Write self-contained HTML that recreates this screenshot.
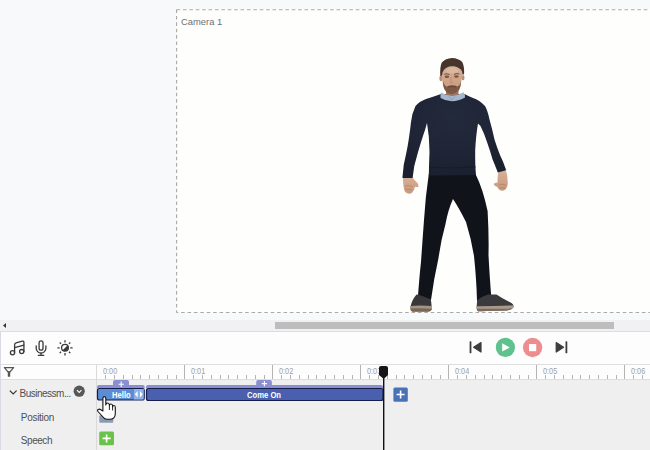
<!DOCTYPE html>
<html><head><meta charset="utf-8">
<style>
*{margin:0;padding:0;box-sizing:border-box}
html,body{width:650px;height:450px;overflow:hidden;background:#f8f9fb;font-family:"Liberation Sans",sans-serif;position:relative}
.a{position:absolute}
#cam{left:176px;top:9px;width:480px;height:304px;background:#fefefd}
#camlbl{left:181px;top:16px;font-size:9.4px;color:#707070;white-space:nowrap}
#track{left:0;top:320px;width:650px;height:11px;background:#f1f1f3}
#thumb{left:275px;top:322px;width:339px;height:7px;background:#bdbdbd}
#line1{left:0;top:331px;width:650px;height:1px;background:#dcdce4}
#tool{left:0;top:332px;width:650px;height:32px;background:#fdfdfd}
#line2{left:0;top:364px;width:650px;height:1px;background:#dedede}
#hdr{left:0;top:365px;width:650px;height:14px;background:#fdfdfd}
#line3{left:0;top:379px;width:650px;height:1px;background:#dedede}
#rows{left:0;top:380px;width:650px;height:70px;background:#efefef}
#vdiv{left:96px;top:365px;width:1px;height:85px;background:#dadada}
#ledge{left:0;top:332px;width:1px;height:118px;background:#d8d8e6}
.lbl{font-size:9.5px;color:#505050;white-space:nowrap}
.tick{font-size:8.5px;transform:scaleX(0.86);transform-origin:0 0;color:#a0a0a0;white-space:nowrap}
</style></head><body>
<div id="cam" class="a"></div>
<svg class="a" style="left:0;top:0" width="650" height="450">
  <line x1="176.5" y1="9.8" x2="650" y2="9.8" stroke="#a9a9a9" stroke-width="1.1" stroke-dasharray="3.6 2.8"/>
  <line x1="176.6" y1="9.5" x2="176.6" y2="312.5" stroke="#a9a9a9" stroke-width="1.1" stroke-dasharray="3.6 2.8"/>
  <line x1="176.5" y1="312.5" x2="650" y2="312.5" stroke="#a9a9a9" stroke-width="1.1" stroke-dasharray="3.6 2.8" stroke-dashoffset="1.8"/>
</svg>

<!-- man -->
<svg class="a" style="left:0;top:0" width="650" height="450">
  <defs>
    <radialGradient id="swg" cx="0.5" cy="0.3" r="0.7">
      <stop offset="0" stop-color="#232a3b"/>
      <stop offset="0.6" stop-color="#1f2536"/>
      <stop offset="1" stop-color="#1b202f"/>
    </radialGradient>
    <linearGradient id="skin" x1="0" y1="0" x2="0" y2="1">
      <stop offset="0" stop-color="#d8b096"/>
      <stop offset="1" stop-color="#c8987c"/>
    </linearGradient>
  </defs>
  <!-- pants -->
  <path d="M428.8 174 L475.5 174 Q483 189 487.6 211 Q489 235 488.5 255 Q489.5 275 491.5 300 L477 301 Q476.5 280 474 256 Q471 238 466 222 Q459 208 453 199 Q448 210 445.5 224 Q441 240 438.5 258 Q434 278 431 300 L418 296 Q419.5 275 421 262 Q422.5 240 424 220 Q425.5 196 428.8 174 Z" fill="#11131b"/>
  <!-- shoes -->
  <path d="M416.5 294.5 Q421 295 430.8 299.5 Q431.8 304 431.6 309.5 Q431 311.5 428 311.5 L412.5 311.5 Q410 311 410.5 307 Q411.5 300.5 416.5 294.5 Z" fill="#38383a"/>
  <path d="M410.5 306 Q420 304.8 431.6 306 L431.6 309.3 Q431 311.5 428 311.5 L412.5 311.5 Q410 311 410.5 306 Z" fill="#a29585"/>
  <path d="M411 308.5 Q420 308 431.5 308.8 L431.4 309.8 Q431 311.5 428 311.5 L412.5 311.5 Q410.5 311 411 308.5 Z" fill="#7a6656"/>
  <path d="M477.2 300 Q483 296 488 294.5 L496.5 294.5 Q503 299 511.5 303 Q514.5 305 513.2 307.8 Q511 310.3 505 310.6 L478.5 311.3 Q476.6 311 476.6 307 Z" fill="#3b3b3d"/>
  <path d="M476.7 306.2 Q495 306.3 513.4 305.2 Q514.2 306.2 513.2 307.8 Q511 310.3 505 310.6 L478.5 311.3 Q476.6 311 476.7 306.2 Z" fill="#a89b8c"/>
  <path d="M476.8 308.8 Q495 309 512.5 308.3 Q511 310.3 505 310.6 L478.5 311.3 Q476.7 311 476.8 308.8 Z" fill="#7d6a5a"/>
  <!-- hands -->
  <path d="M403 177 L412.5 177 Q414 180 416.5 182 Q419 184 418.5 186.5 Q416.5 187.5 415 186.5 Q414.5 191 411.5 193.3 Q407 194.5 404.8 191.5 Q402.8 186 403 177 Z" fill="url(#skin)"/>
  <path d="M498.5 171.5 L506 170.5 Q507.8 176 507.8 183 Q507.5 189 503 190.8 Q499 191 497.5 187 Q494.5 186.5 493.6 184 Q494.5 182.5 497.5 182.5 Q497.2 177 498.5 171.5 Z" fill="url(#skin)"/>
  <path d="M499 184.5 Q503 183.5 506.5 185.5 M499.5 187.8 Q503 187 506 188.5" stroke="#a9755c" stroke-width="0.7" fill="none" opacity="0.8"/>
  <path d="M405 186 Q408.5 185 412.5 186.5 M405.5 189.5 Q408.5 188.6 412 189.8" stroke="#a9755c" stroke-width="0.7" fill="none" opacity="0.8"/>
  <!-- sweater -->
  <path d="M441 94 Q434 96.5 426 99 Q419 101.5 415.5 106 Q412 113 411 122 Q409 140 406.5 152 Q403 165 402.4 178 L412.6 178 Q413.5 166 417.5 154 Q421.5 140 425 130 L427 123 Q429.5 137 429.5 152 Q429 165 428.8 175.5 L476 175 Q475 165 475.2 150 Q476 135 478 123.5 L480.5 126 Q484 133 487 142 Q490.5 152 492.6 159.4 Q495 165 497.8 172.6 L506.2 170.2 Q503.5 162 500 155 Q496.5 146 494.5 139.4 Q492 128 489.5 119.4 Q487.5 110 485 106 Q479.5 100 473 98 Q468 96 464.5 94 Z" fill="url(#swg)"/>
  <path d="M429 166.8 Q452 167.8 475.5 166.3 L475.6 167.6 Q452 169.1 429 168.1 Z" fill="#181c28" opacity="0.8"/>
  <!-- neck & collar -->
  <path d="M446 88 L458.5 88 L458.5 96 L446 96 Z" fill="#9c735f"/>
  <path d="M441 92.5 Q446.5 95.5 452 96 Q458 95.5 463.5 92.3 Q465.3 94.5 465 97.5 Q458 101.3 452 101.3 Q446 101.3 440.5 98 Q440.2 95 441 92.5 Z" fill="#a4b7cf"/>
  <path d="M449 96.5 L452 100 L455 96.5" fill="none" stroke="#8797ad" stroke-width="0.8"/>
  <!-- ears -->
  <ellipse cx="441" cy="78.3" rx="1.6" ry="3" fill="#bd8c72"/>
  <ellipse cx="463.1" cy="77.6" rx="1.4" ry="2.7" fill="#bd8c72"/>
  <!-- face -->
  <path d="M442 74 Q442.5 66.5 452 66 Q461.8 66.5 462.2 74 Q462 80 461 83 Q460 88 459 89 Q456 92.5 451.5 93 Q447.5 92.5 445 89.5 Q443 86.5 442.5 82 Q442 78 442 74 Z" fill="url(#skin)"/>
  <!-- forehead highlight -->
  <ellipse cx="452" cy="70.5" rx="6" ry="3" fill="#dcbca3" opacity="0.7"/>
  <!-- brows/eyes -->
  <path d="M444.3 74.3 Q446.8 73.3 449.5 74.5 M454 74.3 Q456.7 73.1 459.3 74" stroke="#6d4b3b" stroke-width="1" fill="none"/>
  <ellipse cx="446.9" cy="76.8" rx="2.3" ry="1.2" fill="#7a5544"/>
  <ellipse cx="456.4" cy="76.5" rx="2.3" ry="1.2" fill="#7a5544"/>
  <path d="M451.3 77 L450.6 82.5 Q451.8 84 453.2 82.5" stroke="#b58169" stroke-width="0.8" fill="none"/>
  <!-- beard -->
  <path d="M442.9 81 Q443.8 85 446.2 86.8 Q449.3 85 451.8 85.3 Q454.5 85 457.5 86.6 Q460.3 85 461 81.5 Q461.1 86.5 459.2 89.8 Q456 93.8 451.7 94 Q447.3 93.8 444.8 90 Q442.9 87 442.9 81 Z" fill="#7d5846"/>
  <path d="M448 87 Q451.8 86 456 87" stroke="#5e3d30" stroke-width="0.8" fill="none"/>
  <!-- hair -->
  <path d="M440.3 76 Q439.7 67 441.8 62.5 Q445.5 58.3 452 58 Q458.5 58.3 462.2 62 Q464.5 66 464.1 74 L462.6 75 Q462.2 71 461 69.8 Q458 66.5 452 66.2 Q446.8 66.5 444.2 69.5 Q442.3 71.5 442 75.5 Z" fill="#47352b"/>
</svg>
<div id="camlbl" class="a">Camera 1</div>

<div id="track" class="a"></div>
<div id="thumb" class="a"></div>
<svg class="a" style="left:0;top:320px" width="10" height="12"><path d="M3 5.5 L6 3 L6 8 Z" fill="#333"/></svg>
<div id="line1" class="a"></div>
<div id="tool" class="a"></div>
<div id="line2" class="a"></div>
<div id="hdr" class="a"></div>
<div id="line3" class="a"></div>
<div id="rows" class="a"></div>
<div id="vdiv" class="a"></div>
<div id="ledge" class="a"></div>


<!-- toolbar icons -->
<svg class="a" style="left:0;top:0" width="650" height="450">
  <g fill="none" stroke="#3a3a3a" stroke-width="1.3" stroke-linecap="round" stroke-linejoin="round">
    <g transform="translate(0.3 0.5)">
    <circle cx="12.2" cy="352.3" r="2.1"/>
    <circle cx="21.4" cy="351.1" r="2.1"/>
    <path d="M14.3 352 V344.3 Q14.3 342.9 15.8 342.4 L22 340.6 Q23.6 340.3 23.6 341.8 V351"/>
    <path d="M14.3 347.2 L23.6 344.7"/>
    </g>
    <rect x="39.1" y="340.9" width="3.9" height="9.2" rx="1.95"/>
    <path d="M36.2 345.8 V348.2 A4.85 4.85 0 0 0 45.9 348.2 V345.8"/>
    <path d="M41.05 353 V355 M38.3 355.3 H43.8"/>
    <circle cx="65" cy="347.8" r="3.4"/>
  </g>
  <path d="M67.4 345.4 A3.4 3.4 0 0 1 62.6 350.2 Z" fill="#3a3a3a"/>
  <g stroke="#3a3a3a" stroke-width="1.3" stroke-linecap="butt">
    <path d="M70.30 347.80 L72.60 347.80 M68.96 351.76 L70.30 353.10 M65.00 353.10 L65.00 355.40 M61.04 351.76 L59.70 353.10 M59.70 347.80 L57.40 347.80 M61.04 343.84 L59.70 342.50 M65.00 342.50 L65.00 340.20 M68.96 343.84 L70.30 342.50"/>
  </g>
  <!-- playback -->
  <rect x="469.6" y="341.3" width="1.8" height="12" rx="0.6" fill="#3d3d3d"/>
  <path d="M481 342.6 L473.6 347.3 L481 352 Z" fill="#3d3d3d" stroke="#3d3d3d" stroke-width="1.2" stroke-linejoin="round"/>
  <circle cx="505.4" cy="347.4" r="9.6" fill="#5dc28d"/>
  <path d="M502.2 343.3 L509.8 347.4 L502.2 351.5 Z" fill="#fff"/>
  <circle cx="532.6" cy="347.5" r="9.7" fill="#ee8d90"/>
  <rect x="529" y="344" width="7.2" height="7.2" fill="#fff"/>
  <path d="M556.2 342.6 L563.6 347.3 L556.2 352 Z" fill="#3d3d3d" stroke="#3d3d3d" stroke-width="1.2" stroke-linejoin="round"/>
  <rect x="565.5" y="341.3" width="1.8" height="12" rx="0.6" fill="#3d3d3d"/>
  <!-- filter -->
  <path d="M4.4 367.6 H13.6 L10 371.8 H8 Z" fill="none" stroke="#555" stroke-width="1.3" stroke-linejoin="round"/><rect x="7.8" y="371.5" width="2.4" height="5.3" rx="0.5" fill="#555"/>
  <!-- ruler -->
  <g id="ruler" stroke="#b4b4b4" stroke-width="1"><path d="M105.5 375 V379"/><path d="M114.5 375 V379"/><path d="M123.5 375 V379"/><path d="M132.5 375 V379"/><path d="M140.5 375 V379"/><path d="M149.5 375 V379"/><path d="M158.5 375 V379"/><path d="M167.5 375 V379"/><path d="M176.5 375 V379"/><path d="M184.5 365 V379"/><path d="M193.5 375 V379"/><path d="M202.5 375 V379"/><path d="M211.5 375 V379"/><path d="M220.5 375 V379"/><path d="M228.5 375 V379"/><path d="M237.5 375 V379"/><path d="M246.5 375 V379"/><path d="M255.5 375 V379"/><path d="M264.5 375 V379"/><path d="M272.5 365 V379"/><path d="M281.5 375 V379"/><path d="M290.5 375 V379"/><path d="M299.5 375 V379"/><path d="M308.5 375 V379"/><path d="M316.5 375 V379"/><path d="M325.5 375 V379"/><path d="M334.5 375 V379"/><path d="M343.5 375 V379"/><path d="M352.5 375 V379"/><path d="M360.5 365 V379"/><path d="M369.5 375 V379"/><path d="M378.5 375 V379"/><path d="M387.5 375 V379"/><path d="M396.5 375 V379"/><path d="M404.5 375 V379"/><path d="M413.5 375 V379"/><path d="M422.5 375 V379"/><path d="M431.5 375 V379"/><path d="M440.5 375 V379"/><path d="M448.5 365 V379"/><path d="M457.5 375 V379"/><path d="M466.5 375 V379"/><path d="M475.5 375 V379"/><path d="M484.5 375 V379"/><path d="M492.5 375 V379"/><path d="M501.5 375 V379"/><path d="M510.5 375 V379"/><path d="M519.5 375 V379"/><path d="M528.5 375 V379"/><path d="M536.5 365 V379"/><path d="M545.5 375 V379"/><path d="M554.5 375 V379"/><path d="M563.5 375 V379"/><path d="M572.5 375 V379"/><path d="M580.5 375 V379"/><path d="M589.5 375 V379"/><path d="M598.5 375 V379"/><path d="M607.5 375 V379"/><path d="M616.5 375 V379"/><path d="M624.5 365 V379"/><path d="M633.5 375 V379"/><path d="M642.5 375 V379"/></g>
</svg>
<div class="a tick" style="left:102.8px;top:365.9px">0:00</div>
<div class="a tick" style="left:190.9px;top:365.9px">0:01</div>
<div class="a tick" style="left:279.0px;top:365.9px">0:02</div>
<div class="a tick" style="left:367.1px;top:365.9px">0:03</div>
<div class="a tick" style="left:455.2px;top:365.9px">0:04</div>
<div class="a tick" style="left:543.3px;top:365.9px">0:05</div>
<div class="a tick" style="left:631.4px;top:365.9px">0:06</div>

<!-- left panel -->
<svg class="a" style="left:0;top:0" width="100" height="450">
  <path d="M9.8 390.6 L13.2 393.9 L16.6 390.6" fill="none" stroke="#333" stroke-width="1.2"/>
  <circle cx="79.2" cy="391.2" r="5.6" fill="#575757"/>
  <path d="M76.9 390.2 L79.2 392.4 L81.5 390.2" fill="none" stroke="#fff" stroke-width="1.1"/>
</svg>
<div class="a lbl" style="left:19.5px;top:387.8px;letter-spacing:-0.5px;font-size:10px">Businessm...</div>
<div class="a lbl" style="left:20.8px;top:411.8px;font-size:10px;letter-spacing:-0.3px">Position</div>
<div class="a lbl" style="left:20.8px;top:435.2px;font-size:10px;letter-spacing:-0.45px">Speech</div>

<!-- clips -->
<svg class="a" style="left:0;top:0" width="650" height="450">
  <path d="M113 385.5 V382 Q113 380 115 380 H127 Q129 380 129 382 V385.5 Z" fill="#8a8fd2"/>
  <path d="M97 388.5 V387 Q97 385 99 385 H142.7 Q144.7 385 144.7 387 V388.5 Z" fill="#8a8fd2"/>
  <rect x="97.5" y="388.5" width="46.7" height="11.5" rx="2" fill="#5b8cd4" stroke="#151d4d" stroke-width="1.2"/>
  <rect x="134" y="389" width="9.7" height="10.5" fill="#8eb2ea"/>
  <path d="M137.6 391 L134.9 394.3 L137.6 397.6 Z M140 391 L142.7 394.3 L140 397.6 Z" fill="#fff"/>
  <path d="M118.5 384.2 H123.9 M121.2 381.5 V386.9" stroke="#fff" stroke-width="1.1"/>

  <path d="M256.2 385.5 V382 Q256.2 380 258.2 380 H269.9 Q271.9 380 271.9 382 V385.5 Z" fill="#8a8fd2"/>
  <path d="M146 388.5 V387 Q146 385 148 385 H381 Q383 385 383 387 V388.5 Z" fill="#8a8fd2"/>
  <rect x="146.5" y="388.5" width="236.5" height="12" rx="2" fill="#4a5fad" stroke="#151d4d" stroke-width="1.2"/>
  <path d="M261.8 383.6 H267 M264.4 381 V386.2" stroke="#fff" stroke-width="1.1"/>

  <rect x="393.4" y="387.4" width="14.4" height="14.3" rx="1.5" fill="#4a71b8"/>
  <path d="M396.6 394.55 H404.6 M400.6 390.55 V398.55" stroke="#fff" stroke-width="1.6"/>

  <rect x="99.3" y="415.3" width="14" height="7.5" rx="1" fill="#8b9ab5"/>
  <rect x="99.2" y="431.5" width="14.8" height="13.8" rx="1.5" fill="#6bc24a"/>
  <path d="M102.6 438.4 H110.6 M106.6 434.4 V442.4" stroke="#fff" stroke-width="1.6"/>

  <!-- playhead -->
  <rect x="383" y="370" width="1.4" height="80" fill="#111"/>
  <path d="M379 368 Q379 366 381 366 H386 Q388 366 388 368 V375 L383.7 379 L379 375 Z" fill="#151515"/>
</svg>
<div class="a" style="left:111.8px;top:390px;font-size:9px;font-weight:bold;color:#fff;white-space:nowrap;transform:scaleX(0.85);transform-origin:0 0">Hello</div>
<div class="a" style="left:247px;top:390px;font-size:9px;font-weight:bold;color:#fff;white-space:nowrap;transform:scaleX(0.85);transform-origin:0 0">Come On</div>

<!-- hand cursor -->
<svg class="a" style="left:0;top:0" width="650" height="450">
  <path d="M102.9 411 V398.6 Q102.9 396.6 104.3 396.6 Q105.8 396.6 105.8 398.6 V405 Q106 403 107.7 403 Q109.3 403 109.4 405 V405.8 Q109.6 404 111 404 Q112.6 404 112.6 406 V407 Q112.9 405.5 114 405.5 Q115.3 405.5 115.3 407.5 V413.5 Q115.3 419.3 109.5 419.3 H107 Q104.6 419.3 103 417 L98 411.5 Q97 410.2 98.2 409.4 Q99.6 408.6 100.8 409.8 Z" fill="#fff" stroke="#111" stroke-width="1.1" stroke-linejoin="round"/>
  <path d="M109.4 406 V410 M112.6 407 V410.5" stroke="#111" stroke-width="0.9"/>
</svg>
</body></html>
